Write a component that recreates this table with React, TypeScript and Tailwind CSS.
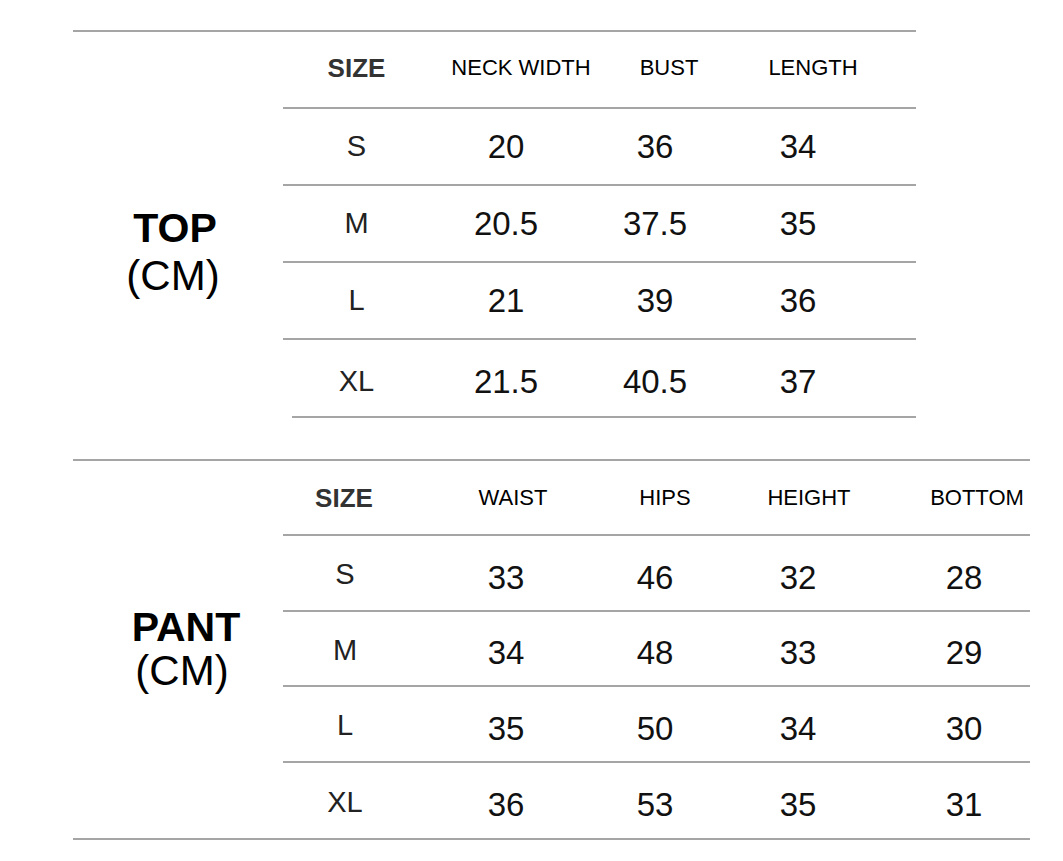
import React from 'react';

const line = 'border-[#a5a5a5]';

const topCols = [
  { w: 'w-[147px]', head: 'SIZE', headPad: '' },
  { w: 'w-[152px]', head: 'NECK WIDTH', headPad: 'pl-[30px]' },
  { w: 'w-[146px]', head: 'BUST', headPad: 'pl-[28px]' },
  { w: 'w-[140px]', head: 'LENGTH', headPad: 'pl-[30px]' },
];

const topRows = [
  ['S', '20', '36', '34'],
  ['M', '20.5', '37.5', '35'],
  ['L', '21', '39', '36'],
  ['XL', '21.5', '40.5', '37'],
];

const pantCols = [
  { w: 'w-[124px]', head: 'SIZE', headPad: 'pr-[2px]', pad: '' },
  { w: 'w-[198px]', head: 'WAIST', headPad: 'pl-[14px]', pad: '' },
  { w: 'w-[100px]', head: 'HIPS', headPad: 'pl-[20px]', pad: '' },
  { w: 'w-[186px]', head: 'HEIGHT', headPad: 'pl-[22px]', pad: '' },
  { w: 'w-[139px]', head: 'BOTTOM', headPad: 'pl-[33px]', pad: 'pl-[7px]' },
];

const pantRows = [
  { h: 'h-[76px]', cells: ['S', '33', '46', '32', '28'] },
  { h: 'h-[75px]', cells: ['M', '34', '48', '33', '29'] },
  { h: 'h-[76px]', cells: ['L', '35', '50', '34', '30'] },
  { h: 'h-[75px]', cells: ['XL', '36', '53', '35', '31'] },
];

function HeadCell({ w, pad, text }: { w: string; pad: string; text: string }) {
  const isSize = text === 'SIZE';
  return (
    <div className={`${w} ${pad} flex justify-center whitespace-nowrap`}>
      {isSize ? (
        <span className="text-[26px] font-bold leading-none text-[#333]">{text}</span>
      ) : (
        <span className="text-[22px] leading-none text-black">{text}</span>
      )}
    </div>
  );
}

function ValueCell({ w, pad, text, first }: { w: string; pad: string; text: string; first: boolean }) {
  return (
    <div className={`${w} ${pad} flex justify-center whitespace-nowrap`}>
      {first ? (
        <span className="text-[29px] leading-none text-[#222]">{text}</span>
      ) : (
        <span className="text-[33px] leading-none text-[#111]">{text}</span>
      )}
    </div>
  );
}

export default function App() {
  return (
    <div
      className="w-[1063px] h-[861px] bg-white pt-[30px]"
      style={{ fontFamily: '"Liberation Sans", Arial, sans-serif' }}
    >
      {/* TOP */}
      <div className={`ml-[73px] w-[843px] flex border-t-2 ${line}`}>
        <div className="w-[210px] flex flex-col items-center pt-[176px] pr-[6px]">
          <div className="text-[41px] font-bold leading-none text-black">TOP</div>
          <div className="text-[42px] leading-none text-black mt-[6px] -ml-[4px]">(CM)</div>
        </div>
        <div className="w-[633px] flex flex-col">
          <div className={`h-[77px] flex items-center pb-[4px] border-b-2 ${line}`}>
            {topCols.map((c) => (
              <HeadCell key={c.head} w={c.w} pad={c.headPad} text={c.head} />
            ))}
          </div>
          {topRows.map((r, i) => {
            const last = i === topRows.length - 1;
            return (
              <div key={r[0]}>
                <div
                  className={`${last ? 'h-[76px] pt-[6px]' : 'h-[77px] border-b-2'} ${line} flex items-center`}
                >
                  {r.map((t, j) => (
                    <ValueCell key={j} w={topCols[j].w} pad="" text={t} first={j === 0} />
                  ))}
                </div>
                {last && <div className="ml-[9px] h-[2px] bg-[#a5a5a5]" />}
              </div>
            );
          })}
        </div>
      </div>

      {/* PANT */}
      <div className={`mt-[41px] ml-[73px] w-[957px] flex border-t-2 border-b-2 ${line}`}>
        <div className="w-[210px] flex flex-col items-center pt-[146px] pl-[16px]">
          <div className="text-[41px] font-bold leading-none text-black">PANT</div>
          <div className="text-[42px] leading-none text-black mt-[2px] -ml-[8px]">(CM)</div>
        </div>
        <div className="w-[747px] flex flex-col">
          <div className={`h-[75px] flex items-center border-b-2 ${line}`}>
            {pantCols.map((c) => (
              <HeadCell key={c.head} w={c.w} pad={c.headPad} text={c.head} />
            ))}
          </div>
          {pantRows.map((r, i) => (
            <div
              key={r.cells[0]}
              className={`${r.h} flex items-center ${i < pantRows.length - 1 ? `border-b-2 ${line}` : ''}`}
            >
              {r.cells.map((t, j) => (
                <div key={j} className={`flex ${j === 0 ? 'pt-[3px]' : 'pt-[8px]'}`}>
                  <ValueCell w={pantCols[j].w} pad={pantCols[j].pad} text={t} first={j === 0} />
                </div>
              ))}
            </div>
          ))}
        </div>
      </div>
    </div>
  );
}
